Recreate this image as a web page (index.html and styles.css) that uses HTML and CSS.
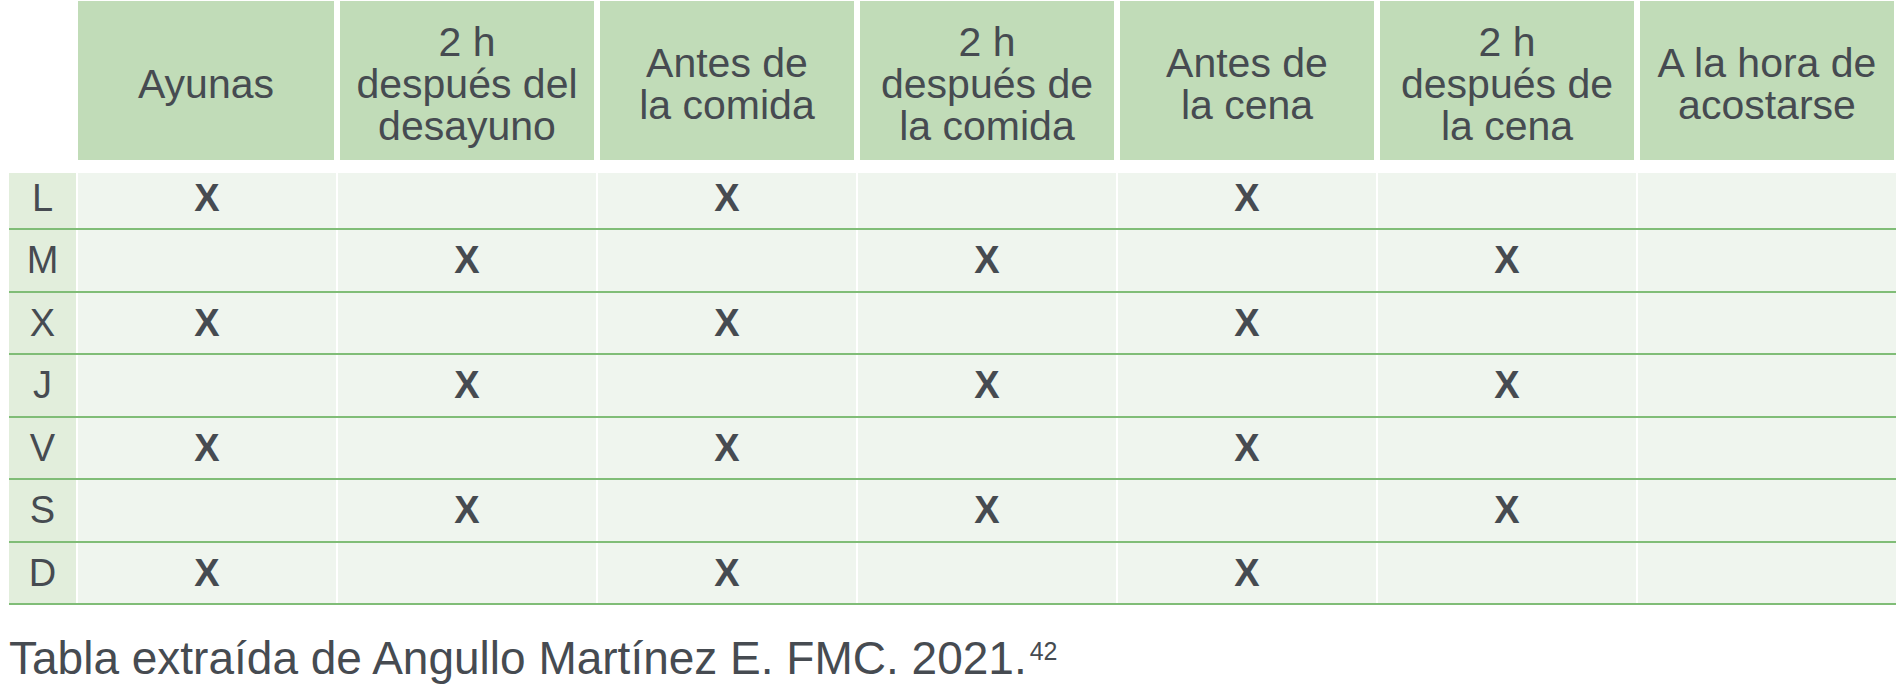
FILE: index.html
```html
<!DOCTYPE html>
<html lang="es">
<head>
<meta charset="utf-8">
<title>Tabla</title>
<link rel="stylesheet" href="styles.css">
</head>
<body>
<div class="page">
  <div class="table">
    <div class="head">
      <div class="corner"></div>
      <div class="th">Ayunas</div>
      <div class="th">2 h<br>después del<br>desayuno</div>
      <div class="th">Antes de<br>la comida</div>
      <div class="th">2 h<br>después de<br>la comida</div>
      <div class="th">Antes de<br>la cena</div>
      <div class="th">2 h<br>después de<br>la cena</div>
      <div class="th">A la hora de<br>acostarse</div>
    </div>
    <div class="tbody">
      <div class="tr first">
        <div class="day">L</div>
        <div class="td">X</div><div class="td"></div><div class="td">X</div><div class="td"></div><div class="td">X</div><div class="td"></div><div class="td"></div>
      </div>
      <div class="tr">
        <div class="day">M</div>
        <div class="td"></div><div class="td">X</div><div class="td"></div><div class="td">X</div><div class="td"></div><div class="td">X</div><div class="td"></div>
      </div>
      <div class="tr">
        <div class="day">X</div>
        <div class="td">X</div><div class="td"></div><div class="td">X</div><div class="td"></div><div class="td">X</div><div class="td"></div><div class="td"></div>
      </div>
      <div class="tr">
        <div class="day">J</div>
        <div class="td"></div><div class="td">X</div><div class="td"></div><div class="td">X</div><div class="td"></div><div class="td">X</div><div class="td"></div>
      </div>
      <div class="tr">
        <div class="day">V</div>
        <div class="td">X</div><div class="td"></div><div class="td">X</div><div class="td"></div><div class="td">X</div><div class="td"></div><div class="td"></div>
      </div>
      <div class="tr">
        <div class="day">S</div>
        <div class="td"></div><div class="td">X</div><div class="td"></div><div class="td">X</div><div class="td"></div><div class="td">X</div><div class="td"></div>
      </div>
      <div class="tr">
        <div class="day">D</div>
        <div class="td">X</div><div class="td"></div><div class="td">X</div><div class="td"></div><div class="td">X</div><div class="td"></div><div class="td"></div>
      </div>
    </div>
  </div>
  <p class="caption">Tabla extraída de Angullo Martínez E. FMC. 2021.<span class="sup">42</span></p>
</div>
</body>
</html>
```
FILE: styles.css
```css
html, body {
  margin: 0;
  padding: 0;
  background: #ffffff;
}

body {
  font-family: "Liberation Sans", Arial, sans-serif;
  color: #464b51;
}

.page {
  padding: 1px 0 0 9px;
}

.table {
  width: 1887px;
}

.head,
.tr {
  display: grid;
  grid-template-columns: 67px repeat(7, 258px);
  column-gap: 2px;
}

.head {
  height: 159px;
}

.th {
  margin: 0 2px 0 2px;
  background: #c1dcb8;
  display: flex;
  align-items: center;
  justify-content: center;
  text-align: center;
  font-size: 41px;
  line-height: 42px;
  padding-top: 7px;
  box-sizing: border-box;
}

.corner + .th {
  margin-left: 0;
}

.tbody {
  margin-top: 13px;
}

.tr {
  height: 60.5px;
  border-bottom: 2px solid #80bd77;
}

.tr.first {
  height: 55px;
}

.day,
.td {
  display: flex;
  align-items: center;
  justify-content: center;
  line-height: 1;
  font-size: 38px;
}

.day {
  background: #e2eedc;
}

.td {
  background: #eff5ee;
  font-weight: bold;
}

.tr.first .day,
.tr.first .td {
  padding-bottom: 5px;
  box-sizing: border-box;
}

.caption {
  margin: 20px 0 0 0;
  font-size: 46px;
  line-height: 53px;
}

.sup {
  font-size: 25px;
  vertical-align: 14px;
  margin-left: 3px;
}
```
